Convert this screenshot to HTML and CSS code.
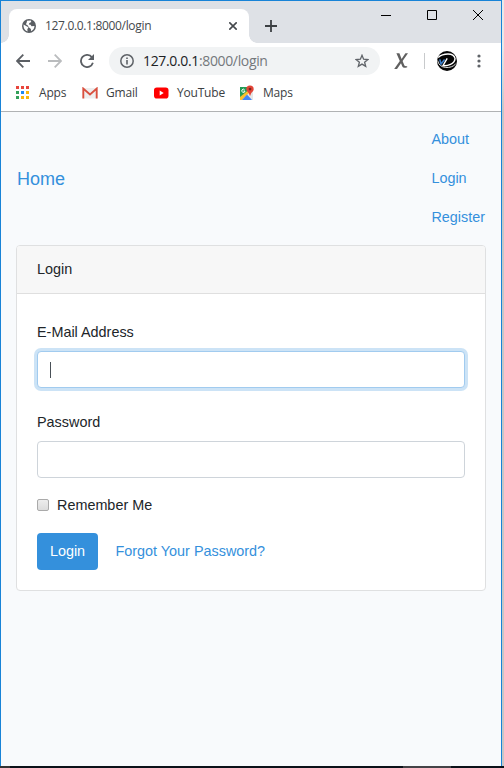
FILE: index.html
```html
<!DOCTYPE html>
<html lang="en">
<head>
<meta charset="utf-8">
<title>Login</title>
<link rel="stylesheet" href="styles.css">
</head>
<body>
<div class="window">
  <header class="tabstrip">
    <div class="tab">
      <svg class="globe" width="14" height="14" viewBox="0 0 14 14"><circle cx="7" cy="7" r="7" fill="#5a5e63"/><path d="M1.5 5.5 5 7.5 6.5 8.2 5.3 10.2 5.6 12.4Q1.2 11 1.5 5.5Z" fill="#fff"/><path d="M5 1.8 8.8 1.5 9.3 3.1 7.4 4 6.8 5.4 8.6 5.7 9.5 7.3 12.5 7.1Q12.2 10.8 9 12.3L8.9 10 6.8 8.3 5.8 6.6 3.9 5.3 4.7 3.6Z" fill="#fff"/></svg>
      <span class="tab-title">127.0.0.1:8000/login</span>
      <svg class="tab-close" width="8" height="8" viewBox="0 0 8 8"><path d="M.3.3 7.7 7.7M7.7.3.3 7.7" stroke="#45494d" stroke-width="1.6"/></svg>
    </div>
    <svg class="newtab" width="12" height="12" viewBox="0 0 12 12"><path d="M6 0V12M0 6H12" stroke="#3c4043" stroke-width="1.8"/></svg>
    <div class="controls">
      <svg width="10" height="10" viewBox="0 0 10 10"><path d="M0 5.5H10" stroke="#000"/></svg>
      <svg width="10" height="10" viewBox="0 0 10 10"><path d="M.5.5H9.5V9.5H.5Z" fill="none" stroke="#000"/></svg>
      <svg width="10" height="10" viewBox="0 0 10 10"><path d="M0 0 10 10M10 0 0 10" stroke="#000"/></svg>
    </div>
  </header>
  <div class="toolbar">
    <svg class="back" width="14" height="14" viewBox="0 0 14 14"><path d="M14 7H1M7.3.7 1 7 7.3 13.3" fill="none" stroke="#5b5f64" stroke-width="1.8"/></svg>
    <svg class="forward" width="14" height="14" viewBox="0 0 14 14"><path d="M0 7H13M6.7.7 13 7 6.7 13.3" fill="none" stroke="#babcbe" stroke-width="1.8"/></svg>
    <svg class="reload" width="14" height="14" viewBox="0 0 14 14"><path d="M12 3.4A6.1 6.1 0 1 0 12.9 8.8" fill="none" stroke="#5b5f64" stroke-width="1.8"/><path d="M14 0V6H8Z" fill="#5b5f64"/></svg>
    <div class="omnibox">
      <svg width="14" height="14" viewBox="0 0 14 14"><circle cx="7" cy="7" r="6.2" fill="none" stroke="#5f6368" stroke-width="1.5"/><path d="M7 6V10.4M7 3.4V5" stroke="#5f6368" stroke-width="1.6"/></svg>
      <span class="url"><b>127.0.0.1</b>:8000/login</span>
      <svg class="star" width="14" height="14" viewBox="0 0 14 14"><path d="M7 1.3 8.6 5.2 12.9 5.5 9.6 8.2 10.7 12.4 7 10.1 3.3 12.4 4.4 8.2 1.1 5.5 5.4 5.2Z" fill="none" stroke="#5f6368" stroke-width="1.3"/></svg>
    </div>
    <svg class="ext" width="14" height="16" viewBox="0 0 14 16"><path d="M2.4.3H5.4L7.6 6 11.4.2H14L8.6 8 10.4 12.6Q10.7 13.3 13.2 13.2V14.2Q9.2 15.8 8.3 13.4L7 10.2 3 15.9H.2L5.8 8Z" fill="#606060"/></svg>
    <i class="divider"></i>
    <svg class="avatar" width="20" height="20" viewBox="0 0 20 20"><circle cx="10" cy="10" r="10" fill="#050505"/><path d="M1.2 6.4Q5 3 11 3T18 7.4Q18 11 13.5 13.3Q10 15 6 14.6L10.2 7.4" fill="none" stroke="#fff" stroke-width="1.4"/><path d="M.6 9.5Q2 15.8 8.5 16.4T18.6 13" fill="none" stroke="#e5e5e5" stroke-width="1"/><path d="M2.8 8.4 4 13 7.6 8.4" fill="none" stroke="#397cc8" stroke-width="1.6"/></svg>
    <svg class="menu" width="4" height="14" viewBox="0 0 4 14"><g fill="#5f6368"><circle cx="2" cy="2" r="1.6"/><circle cx="2" cy="7" r="1.6"/><circle cx="2" cy="12" r="1.6"/></g></svg>
  </div>
  <nav class="bookmarks">
    <svg class="apps" width="13" height="13" viewBox="0 0 13 13"><path d="M0 0H3V3H0ZM5 0H8V3H5ZM10 0H13V3H10Z" fill="#e8453c"/><path d="M0 5H3V8H0ZM0 10H3V13H0Z" fill="#34a05a"/><path d="M5 5H8V8H5Z" fill="#1e88f0"/><path d="M10 5H13V8H10ZM5 10H8V13H5ZM10 10H13V13H10Z" fill="#f9b50b"/></svg>
    <span class="b-apps">Apps</span>
    <svg width="16" height="12" viewBox="0 0 16 12"><path d="M1 1H15V11.5H1Z" fill="#eee"/><path d="M1.3 11.5V1.6L8 7.4 14.7 1.6V11.5" fill="none" stroke="#d9503f" stroke-width="1.9"/></svg>
    <span class="b-gmail">Gmail</span>
    <svg width="16" height="12" viewBox="0 0 16 12"><rect x="1" y=".5" width="14.5" height="11" rx="2.8" fill="#f00"/><path d="M6.7 3.6 10.7 6 6.7 8.4Z" fill="#fff"/></svg>
    <span class="b-yt">YouTube</span>
    <svg width="16" height="16" viewBox="0 0 16 16"><path d="M1 2H14V15H1Z" fill="#e5e7e8"/><path d="M1 2H11L8 8 1 14Z" fill="#239b56"/><path d="M1 12 12 3 13 5 3 15H1Z" fill="#fbc02d"/><path d="M3 15 8 9.5 13 15Z" fill="#4285f4"/><path d="M5.5 4.6A1.6 1.6 0 1 0 6 6H4.5" fill="none" stroke="#fff"/><path d="M11 .5A3.7 3.7 0 0 1 14.7 4.2C14.7 6.6 11.7 7.3 11.5 10.5H10.6C10.4 7.3 7.3 6.6 7.3 4.2A3.7 3.7 0 0 1 11 .5Z" fill="#e34436"/><circle cx="11" cy="4.1" r="1.4" fill="#7b231d"/></svg>
    <span class="b-maps">Maps</span>
  </nav>
  <main class="page">
    <nav class="navbar">
      <a class="brand">Home</a>
      <ul class="links"><li>About</li><li>Login</li><li>Register</li></ul>
    </nav>
    <section class="card">
      <div class="card-header">Login</div>
      <form class="card-body">
        <label>E-Mail Address</label>
        <div class="input focused"><i class="caret"></i></div>
        <label>Password</label>
        <div class="input"></div>
        <div class="remember"><i class="check"></i><span>Remember Me</span></div>
        <div class="actions"><span class="btn">Login</span><a>Forgot Your Password?</a></div>
      </form>
    </section>
  </main>
</div>
<div class="desktop-edge"></div>
<footer class="taskbar"><i class="start"></i><i class="task"></i></footer>
</body>
</html>
```
FILE: styles.css
```css
* { box-sizing: border-box; }
body {
  margin: 0;
  width: 504px;
  height: 768px;
  overflow: hidden;
  display: grid;
  grid-template: 766px 2px / 502px 2px;
  font: 14.4px/23px "Liberation Sans", Arial, sans-serif;
  color: #212529;
}
svg { display: block; flex: none; }
.window {
  border: 1px solid #1883d7;
  border-bottom: 0;
  background: #f8fafc;
  display: flex;
  flex-direction: column;
}
.desktop-edge { background: linear-gradient(#e9e9e9 0, #e9e9e9 45px, #c7c7c7 110px); }
.taskbar { grid-column: 1 / 3; background: #0b1118; display: flex; justify-content: space-between; padding-right: 53px; }
.start { width: 10px; background: #333; }
.task { width: 48px; background: #444347; }

.tabstrip { height: 42px; background: #dee1e6; display: flex; padding: 8px 0 0 8px; }
.tab {
  position: relative;
  width: 240px;
  height: 34px;
  padding: 0 12px 0 13px;
  background: #fff;
  border-radius: 8px 8px 0 0;
  display: flex;
  align-items: center;
}
.tab::before, .tab::after { content: ""; position: absolute; bottom: 0; width: 8px; height: 8px; }
.tab::before { left: -8px; background: radial-gradient(circle at 0 0, #dee1e6 7.5px, #fff 8px); }
.tab::after { right: -8px; background: radial-gradient(circle at 100% 0, #dee1e6 7.5px, #fff 8px); }
.tab-title { margin: 0 auto 0 9px; font: 12px/16px "Open Sans", sans-serif; letter-spacing: -.33px; color: #45494d; }
.newtab { margin: 11px 0 0 16px; }
.controls { display: flex; gap: 36px; margin: 1px 18px 0 auto; }

.toolbar { height: 36px; background: #fff; display: flex; align-items: center; padding: 0 20px 0 15px; }
.forward, .reload { margin-left: 18px; }
.omnibox { width: 271px; height: 28px; margin-left: 15px; padding: 0 11px; border-radius: 14px; background: #f1f3f4; display: flex; align-items: center; }
.url { margin-left: 9px; font: 14px/20px "Open Sans", sans-serif; letter-spacing: -.35px; color: #74787c; }
.url b { font-weight: 400; color: #202124; }
.star { margin-left: auto; }
.ext { margin-left: 14px; }
.divider { width: 1px; height: 16px; margin-left: 16px; background: #c8cacc; }
.avatar { margin-left: 12px; }
.menu { margin-left: 20px; }
.bookmarks { height: 33px; background: #fff; border-bottom: 1px solid #b0b2b4; display: flex; align-items: center; padding: 0 0 5px 15px; font: 12px/16px "Open Sans", sans-serif; letter-spacing: -.2px; color: #3c4043; }
.b-apps { width: 43px; margin-left: 10px; }
.b-gmail { width: 47px; margin-left: 8px; }
.b-yt { width: 62px; margin-left: 8px; }
.b-maps { margin-left: 8px; }

.page { flex: 1; padding: 0 15px; }
.navbar { height: 133px; padding: 8px 1px; display: flex; align-items: center; justify-content: space-between; color: #3490dc; }
.brand { font-size: 18px; padding-top: 2px; }
.links { list-style: none; margin: 0; padding: 0; }
.links li { padding: 8px 0; }
.card { border: 1px solid #dfe0e1; border-radius: 4px; background: #fff; }
.card-header { height: 48px; padding: 12px 20px; background: #f7f7f7; border-bottom: 1px solid #dfdfdf; border-radius: 3px 3px 0 0; }
.card-body { padding: 20px; display: flex; flex-direction: column; }
label { padding: 7px 0; }
.input { height: 37px; margin-bottom: 16px; padding: 10px 12px; border: 1px solid #ced4da; border-radius: 4px; background: #fff; }
.focused { border-color: #a1cbef; box-shadow: 0 0 0 3px rgba(52, 144, 220, .25); }
.caret { display: block; width: 1px; height: 16px; background: #495057; }
.remember { height: 23px; margin-bottom: 16px; display: flex; align-items: center; gap: 8px; }
.check { width: 12px; height: 12px; margin-bottom: 1px; border: 1px solid #aaa; border-radius: 2px; background: linear-gradient(#ededed, #dcdcdc); }
.actions { height: 37px; display: flex; align-items: center; gap: 17.5px; color: #3490dc; }
.btn { width: 61px; height: 37px; line-height: 37px; text-align: center; color: #fff; background: #3490dc; border-radius: 4px; }
```
